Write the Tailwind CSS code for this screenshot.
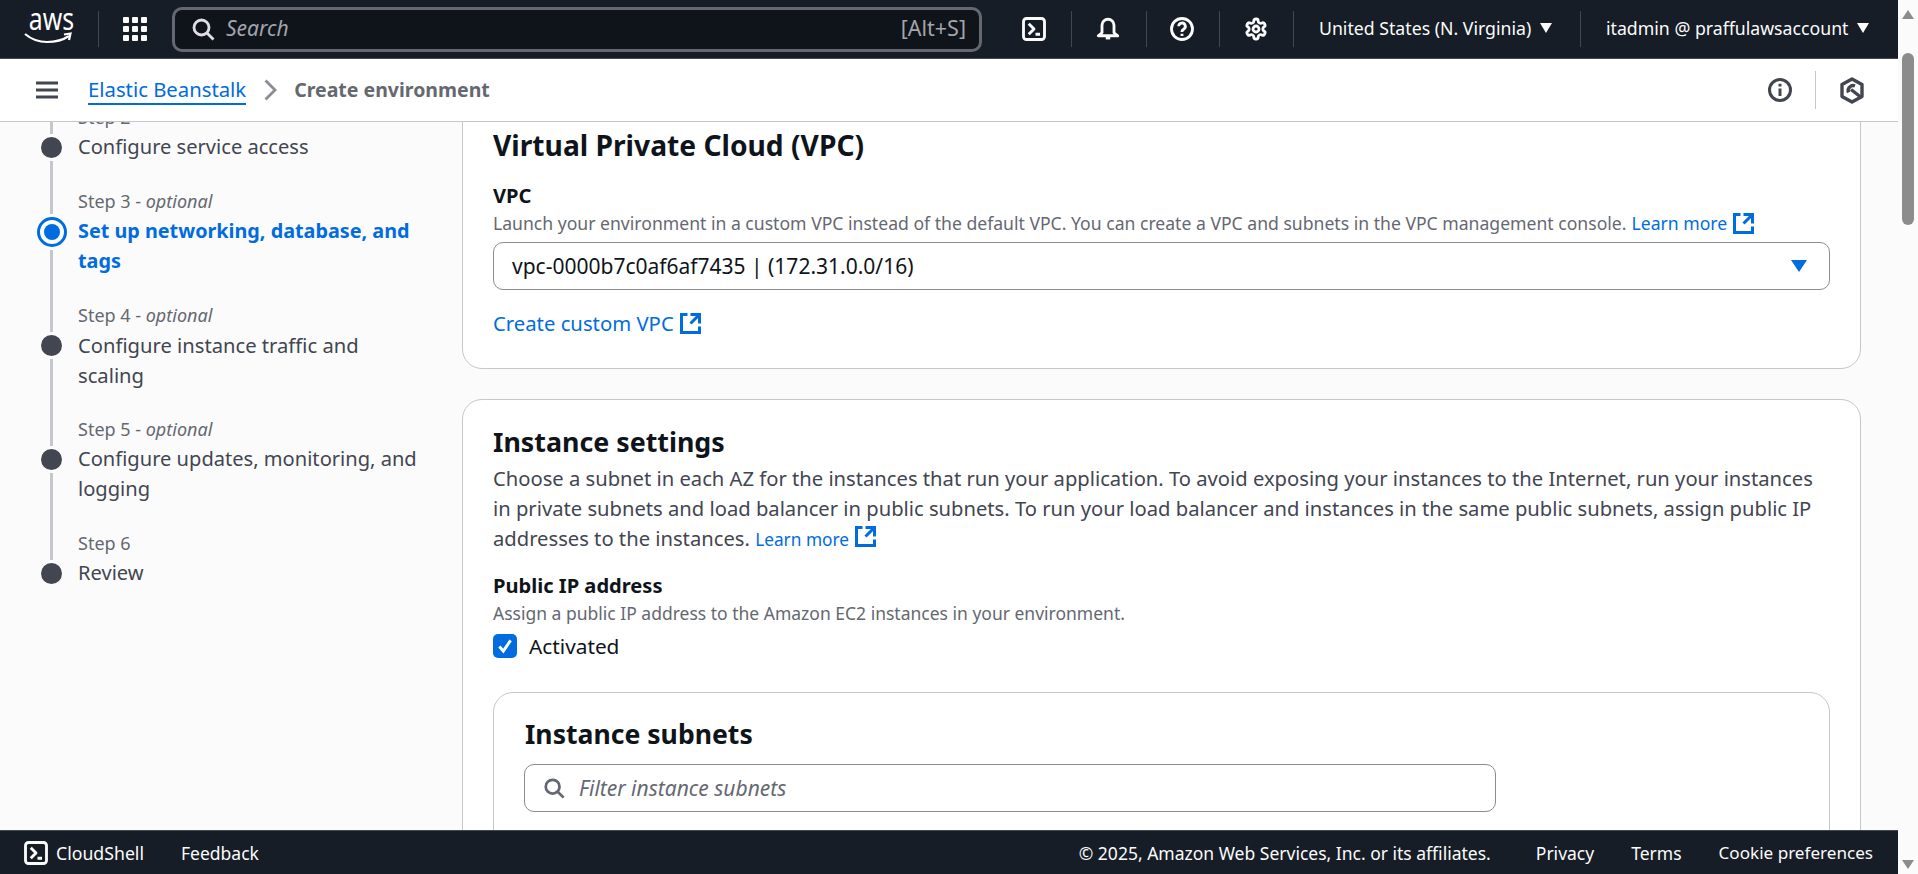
<!DOCTYPE html>
<html lang="en">
<head>
  <meta charset="UTF-8" />
  <title>Create environment | Elastic Beanstalk</title>
  <script src="https://cdn.jsdelivr.net/npm/@tailwindcss/browser@4"></script>
</head>
<body class="h-screen overflow-hidden flex bg-[#fbfbfb] text-[20.1px] leading-[30px] text-[#424650] font-['Noto_Sans',sans-serif]">

  <div class="w-[1898px] h-full flex flex-col">

    <!-- Top navigation -->
    <header class="h-[59px] shrink-0 bg-[#161d26] border-b border-[#424650] flex items-center text-[#fbfbfb] text-[17.7px]">
      <div class="w-[98px] shrink-0 pl-[24px]">
        <div class="relative w-[48px] h-[34px]">
          <span class="absolute left-0 -top-[9px] w-full scale-x-[0.8] text-white text-[31px] leading-[31px] text-center">aws</span>
          <svg class="absolute left-0 top-[20px]" width="48" height="12" viewBox="0 0 48 12" fill="none" stroke="white" stroke-width="2.2">
            <path d="M1 2c6 5 14 8 22 8 8 0 16-2 22-6" />
            <path d="M40 2.5l6.5-1-1.5 6.5" />
          </svg>
        </div>
      </div>
      <div class="w-px h-[36px] bg-[#424650] shrink-0"></div>
      <div class="ml-[24px] w-[24px] h-[24px] grid grid-cols-3 gap-[3px] shrink-0">
        <i class="bg-[#fbfbfb] rounded-[1px]"></i><i class="bg-[#fbfbfb] rounded-[1px]"></i><i class="bg-[#fbfbfb] rounded-[1px]"></i>
        <i class="bg-[#fbfbfb] rounded-[1px]"></i><i class="bg-[#fbfbfb] rounded-[1px]"></i><i class="bg-[#fbfbfb] rounded-[1px]"></i>
        <i class="bg-[#fbfbfb] rounded-[1px]"></i><i class="bg-[#fbfbfb] rounded-[1px]"></i><i class="bg-[#fbfbfb] rounded-[1px]"></i>
      </div>
      <div class="ml-[25px] w-[810px] h-[45px] shrink-0 rounded-[10px] border-[3px] border-[#656871] bg-[#0f141a] flex items-center pl-[16px] pr-[13px]">
        <svg width="24" height="24" viewBox="0 0 16 16" fill="none" stroke="#dedee3" stroke-width="1.9"><circle cx="7" cy="7" r="5" /><path d="M15 15l-4.5-4.5" /></svg>
        <span class="ml-[11px] -mt-[2px] italic text-[#a4a4ad] text-[21px]">Search</span>
        <span class="ml-auto -mt-[2px] text-[#a4a4ad] text-[21.5px]">[Alt+S]</span>
      </div>
      <div class="ml-[40px] w-[24px] shrink-0">
        <svg width="24" height="24" viewBox="0 0 16 16" fill="none" stroke="#fbfbfb" stroke-width="1.9" stroke-linejoin="round"><rect x="1" y="1" width="14" height="14" rx="2" /><path d="M4.5 4.5 8 8l-3.5 3.5M9 11.5h3" /></svg>
      </div>
      <div class="ml-[25px] w-px h-[36px] bg-[#424650] shrink-0"></div>
      <div class="ml-[24px] w-[24px] shrink-0">
        <svg width="24" height="24" viewBox="0 0 16 16" fill="none" stroke="#fbfbfb" stroke-width="1.9" stroke-linejoin="round"><path d="M4 10.5V5.5a4 4 0 0 1 8 0v5l2.5 2h-13z" /><path d="M6.5 14h3" /></svg>
      </div>
      <div class="ml-[26px] w-px h-[36px] bg-[#424650] shrink-0"></div>
      <div class="ml-[23px] w-[24px] shrink-0">
        <svg width="24" height="24" viewBox="0 0 16 16" fill="none" stroke="#fbfbfb" stroke-width="1.9"><circle cx="8" cy="8" r="7" /><path d="M5.8 6.2a2.2 2.2 0 1 1 3.3 1.9c-.7.4-1.1.9-1.1 1.6v.3M8 11.2v1.4" /></svg>
      </div>
      <div class="ml-[25px] w-px h-[36px] bg-[#424650] shrink-0"></div>
      <div class="ml-[24px] w-[24px] shrink-0">
        <svg width="24" height="24" viewBox="0 0 24 24" fill="none" stroke="#fbfbfb" stroke-width="2.8"><path d="M12.22 2h-.44a2 2 0 0 0-2 2v.18a2 2 0 0 1-1 1.73l-.43.25a2 2 0 0 1-2 0l-.15-.08a2 2 0 0 0-2.73.73l-.22.38a2 2 0 0 0 .73 2.73l.15.1a2 2 0 0 1 1 1.72v.51a2 2 0 0 1-1 1.74l-.15.09a2 2 0 0 0-.73 2.73l.22.38a2 2 0 0 0 2.73.73l.15-.08a2 2 0 0 1 2 0l.43.25a2 2 0 0 1 1 1.73V20a2 2 0 0 0 2 2h.44a2 2 0 0 0 2-2v-.18a2 2 0 0 1 1-1.73l.43-.25a2 2 0 0 1 2 0l.15.08a2 2 0 0 0 2.73-.73l.22-.39a2 2 0 0 0-.73-2.73l-.15-.08a2 2 0 0 1-1-1.74v-.5a2 2 0 0 1 1-1.74l.15-.09a2 2 0 0 0 .73-2.73l-.22-.38a2 2 0 0 0-2.73-.73l-.15.08a2 2 0 0 1-2 0l-.43-.25a2 2 0 0 1-1-1.73V4a2 2 0 0 0-2-2z" /><circle cx="12" cy="12" r="3" /></svg>
      </div>
      <div class="ml-[25px] w-px h-[36px] bg-[#424650] shrink-0"></div>
      <div class="ml-[25px] w-[261px] -mt-[2px] shrink-0 flex items-center">
        <span>United States (N. Virginia)</span>
        <span class="ml-[9px] w-0 h-0 border-x-[6px] border-x-transparent border-t-[10px] border-t-[#fbfbfb]"></span>
      </div>
      <div class="w-px h-[36px] bg-[#424650] shrink-0"></div>
      <div class="ml-[25px] -mt-[2px] flex items-center">
        <span>itadmin @ praffulawsaccount</span>
        <span class="ml-[9px] w-0 h-0 border-x-[6px] border-x-transparent border-t-[10px] border-t-[#fbfbfb]"></span>
      </div>
    </header>

    <!-- Breadcrumbs bar -->
    <div class="h-[63px] shrink-0 bg-white border-b border-[#c6c6cd] flex items-center pl-[36px] pr-[34px]">
      <svg width="22" height="18" viewBox="0 0 22 18" fill="none" stroke="#424650" stroke-width="3"><path d="M0 2h22M0 9h22M0 16h22" /></svg>
      <a href="#" class="ml-[30px] leading-[27px] text-[20.3px] text-[#006ce0] border-b-2 border-[#006ce0] mt-[1px]">Elastic Beanstalk</a>
      <svg class="ml-[18px]" width="13" height="22" viewBox="0 0 13 22" fill="none" stroke="#8c8c94" stroke-width="2.8"><path d="M1.500 1.500l9.500 9.500-9.500 9.500" /></svg>
      <span class="ml-[17px] font-bold text-[19.5px] text-[#656871]">Create environment</span>
      <svg class="ml-auto" width="24" height="24" viewBox="0 0 16 16" fill="none" stroke="#424650" stroke-width="2"><circle cx="8" cy="8" r="7" /><path d="M8 7v5M8 3.8v1.8" /></svg>
      <div class="ml-[23px] w-px h-[38px] bg-[#c6c6cd]"></div>
      <svg class="ml-[24px]" width="24" height="27" viewBox="0 0 24 27" fill="none" stroke="#424650" stroke-width="3.4" stroke-linejoin="round"><path d="M12 2l10 5.5v12L12 25 2 19.500v-12z" /><path d="M8.500 15.500a5 5 0 0 1 6.500-6.500" /><path d="M11 12.500l9 7" /></svg>
    </div>

    <!-- Wizard -->
    <main class="flex-1 min-h-0 overflow-hidden flex">
      <nav class="w-[462px] shrink-0 pl-[36px] -mt-[20px]">

        <div class="flex">
          <div class="w-[31px] mr-[11px] shrink-0 flex flex-col items-center">
            <div class="h-[32px] w-[3px] bg-[#c6c6cd]"></div>
            <div class="mt-[3px] w-[21px] h-[21px] rounded-full bg-[#424650]"></div>
            <div class="mt-[3px] flex-1 w-[3px] bg-[#c6c6cd]"></div>
          </div>
          <div class="pb-[24px]">
            <div class="text-[18px] text-[#656871]">Step 2</div>
            <div>Configure service access</div>
          </div>
        </div>

        <div class="flex">
          <div class="w-[31px] mr-[11px] shrink-0 flex flex-col items-center">
            <div class="h-[28px] w-[3px] bg-[#c6c6cd]"></div>
            <div class="mt-[3px] w-[30px] h-[30px] rounded-full border-[3px] border-[#006ce0] p-[4px]"><div class="w-full h-full rounded-full bg-[#006ce0]"></div></div>
            <div class="mt-[3px] flex-1 w-[3px] bg-[#c6c6cd]"></div>
          </div>
          <div class="pb-[24px] w-[345px]">
            <div class="text-[18px] text-[#656871]">Step 3 - <em>optional</em></div>
            <div class="font-bold text-[19.8px] text-[#006ce0]">Set up networking, database, and tags</div>
          </div>
        </div>

        <div class="flex">
          <div class="w-[31px] mr-[11px] shrink-0 flex flex-col items-center">
            <div class="h-[32px] w-[3px] bg-[#c6c6cd]"></div>
            <div class="mt-[3px] w-[21px] h-[21px] rounded-full bg-[#424650]"></div>
            <div class="mt-[3px] flex-1 w-[3px] bg-[#c6c6cd]"></div>
          </div>
          <div class="pb-[24px] w-[345px]">
            <div class="text-[18px] text-[#656871]">Step 4 - <em>optional</em></div>
            <div class="text-[20.2px]">Configure instance traffic and scaling</div>
          </div>
        </div>

        <div class="flex">
          <div class="w-[31px] mr-[11px] shrink-0 flex flex-col items-center">
            <div class="h-[32px] w-[3px] bg-[#c6c6cd]"></div>
            <div class="mt-[3px] w-[21px] h-[21px] rounded-full bg-[#424650]"></div>
            <div class="mt-[3px] flex-1 w-[3px] bg-[#c6c6cd]"></div>
          </div>
          <div class="pb-[24px] w-[345px]">
            <div class="text-[18px] text-[#656871]">Step 5 - <em>optional</em></div>
            <div>Configure updates, monitoring, and logging</div>
          </div>
        </div>

        <div class="flex">
          <div class="w-[31px] mr-[11px] shrink-0 flex flex-col items-center">
            <div class="h-[32px] w-[3px] bg-[#c6c6cd]"></div>
            <div class="mt-[3px] w-[21px] h-[21px] rounded-full bg-[#424650]"></div>
          </div>
          <div>
            <div class="text-[18px] text-[#656871]">Step 6</div>
            <div>Review</div>
          </div>
        </div>
      </nav>

      <div class="w-[1399px] shrink-0 -mt-[20px]">
        <!-- VPC -->
        <section class="h-[267px] bg-white border border-[#c6c6cd] rounded-[20px] pt-[27px] px-[30px]">
          <h2 class="text-[28.2px] leading-[30px] font-bold text-[#0f141a]">Virtual Private Cloud (VPC)</h2>
          <div class="mt-[21px] font-bold text-[#0f141a]">VPC</div>
          <p class="text-[17.6px] leading-[25px] text-[#656871] flex items-center">
            Launch your environment in a custom VPC instead of the default VPC. You can create a VPC and subnets in the VPC management console.
            <a href="#" class="ml-[5px] text-[#006ce0]">Learn more</a>
            <svg class="ml-[6px]" width="21" height="21" viewBox="1 1 14 14" fill="none" stroke="#006ce0" stroke-width="2"><path d="M14 8V2H8M14 2 8 8M6 2H2v12h12v-4" /></svg>
          </p>
          <div class="mt-[6px] h-[48px] w-[1337px] rounded-[10px] border border-[#8c8c94] flex items-center pl-[18px] pr-[18px] text-[21px] text-[#0f141a]">
            <span>vpc-0000b7c0af6af7435 | (172.31.0.0/16)</span>
            <span class="ml-auto mr-[4px] w-0 h-0 border-x-[8px] border-x-transparent border-t-[12px] border-t-[#006ce0]"></span>
          </div>
          <div class="mt-[18px] flex items-center">
            <a href="#" class="text-[20.3px] text-[#006ce0]">Create custom VPC</a>
            <svg class="ml-[6px]" width="21" height="21" viewBox="1 1 14 14" fill="none" stroke="#006ce0" stroke-width="2"><path d="M14 8V2H8M14 2 8 8M6 2H2v12h12v-4" /></svg>
          </div>
        </section>

        <!-- Instance settings -->
        <section class="mt-[30px] bg-white border border-[#c6c6cd] rounded-[20px] pt-[27px] px-[30px]">
          <h2 class="text-[26.8px] leading-[30px] font-bold text-[#0f141a]">Instance settings</h2>
          <p class="mt-[6px] h-[90px] w-[1325px] text-[20.2px]">
            Choose a subnet in each AZ for the instances that run your application. To avoid exposing your instances to the Internet, run your instances in private subnets and load balancer in public subnets. To run your load balancer and instances in the same public subnets, assign public IP addresses to the instances.
            <a href="#" class="text-[17.3px] text-[#006ce0]">Learn more</a>
            <svg class="inline align-[-1px] ml-[1px]" width="21" height="21" viewBox="1 1 14 14" fill="none" stroke="#006ce0" stroke-width="2"><path d="M14 8V2H8M14 2 8 8M6 2H2v12h12v-4" /></svg>
          </p>
          <div class="mt-[18px] font-bold text-[#0f141a]">Public IP address</div>
          <p class="text-[17.5px] leading-[25px] text-[#656871]">Assign a public IP address to the Amazon EC2 instances in your environment.</p>
          <div class="mt-[5px] flex items-center text-[20.800px] text-[#0f141a]">
            <span class="w-[24px] h-[24px] rounded-[5px] bg-[#006ce0] flex items-center justify-center">
              <svg width="18" height="18" viewBox="0 0 16 16" fill="none" stroke="white" stroke-width="2.6"><path d="M3 8.5l3.5 4L13 3" /></svg>
            </span>
            <span class="ml-[12px]">Activated</span>
          </div>

          <div class="mt-[31px] w-[1337px] h-[400px] rounded-[20px] border border-[#c6c6cd] pt-[26px] px-[31px]">
            <h3 class="text-[26.6px] leading-[30px] font-bold text-[#0f141a]">Instance subnets</h3>
            <div class="mt-[15px] w-[972px] h-[48px] rounded-[10px] border border-[#8c8c94] flex items-center pl-[18px] -ml-[1px]">
              <svg width="22" height="22" viewBox="0 0 16 16" fill="none" stroke="#656871" stroke-width="2"><circle cx="7" cy="7" r="5" /><path d="M15 15l-4.5-4.5" /></svg>
              <span class="ml-[14px] italic text-[21px] text-[#656871]">Filter instance subnets</span>
            </div>
          </div>
        </section>
      </div>
    </main>

    <!-- Footer -->
    <footer class="h-[44px] shrink-0 bg-[#161d26] border-t border-[#424650] flex items-center pl-[24px] pr-[25px] text-[#fbfbfb] text-[17.5px]">
      <svg width="24" height="24" viewBox="0 0 16 16" fill="none" stroke="#fbfbfb" stroke-width="1.9" stroke-linejoin="round"><rect x="1" y="1" width="14" height="14" rx="2" /><path d="M4.5 4.5 8 8l-3.5 3.5M9 11.500h3" /></svg>
      <span class="ml-[8px] text-[17.7px]">CloudShell</span>
      <a href="#" class="ml-[37px]">Feedback</a>
      <span class="ml-auto">© 2025, Amazon Web Services, Inc. or its affiliates.</span>
      <a href="#" class="ml-[45px]">Privacy</a>
      <a href="#" class="ml-[37px]">Terms</a>
      <a href="#" class="ml-[37px] text-[17.1px]">Cookie preferences</a>
    </footer>
  </div>

  <!-- Window scrollbar -->
  <div class="w-[20px] h-full shrink-0 bg-[#fbfbfb] flex flex-col items-center">
    <span class="mt-[10px] w-0 h-0 border-x-[6px] border-x-transparent border-b-[9px] border-b-[#8c8c8c]"></span>
    <div class="mt-[34px] w-[12px] h-[172px] rounded-full bg-[#8c8c8c]"></div>
    <span class="mt-auto mb-[5px] w-0 h-0 border-x-[6px] border-x-transparent border-t-[9px] border-t-[#8c8c8c]"></span>
  </div>

</body>
</html>
